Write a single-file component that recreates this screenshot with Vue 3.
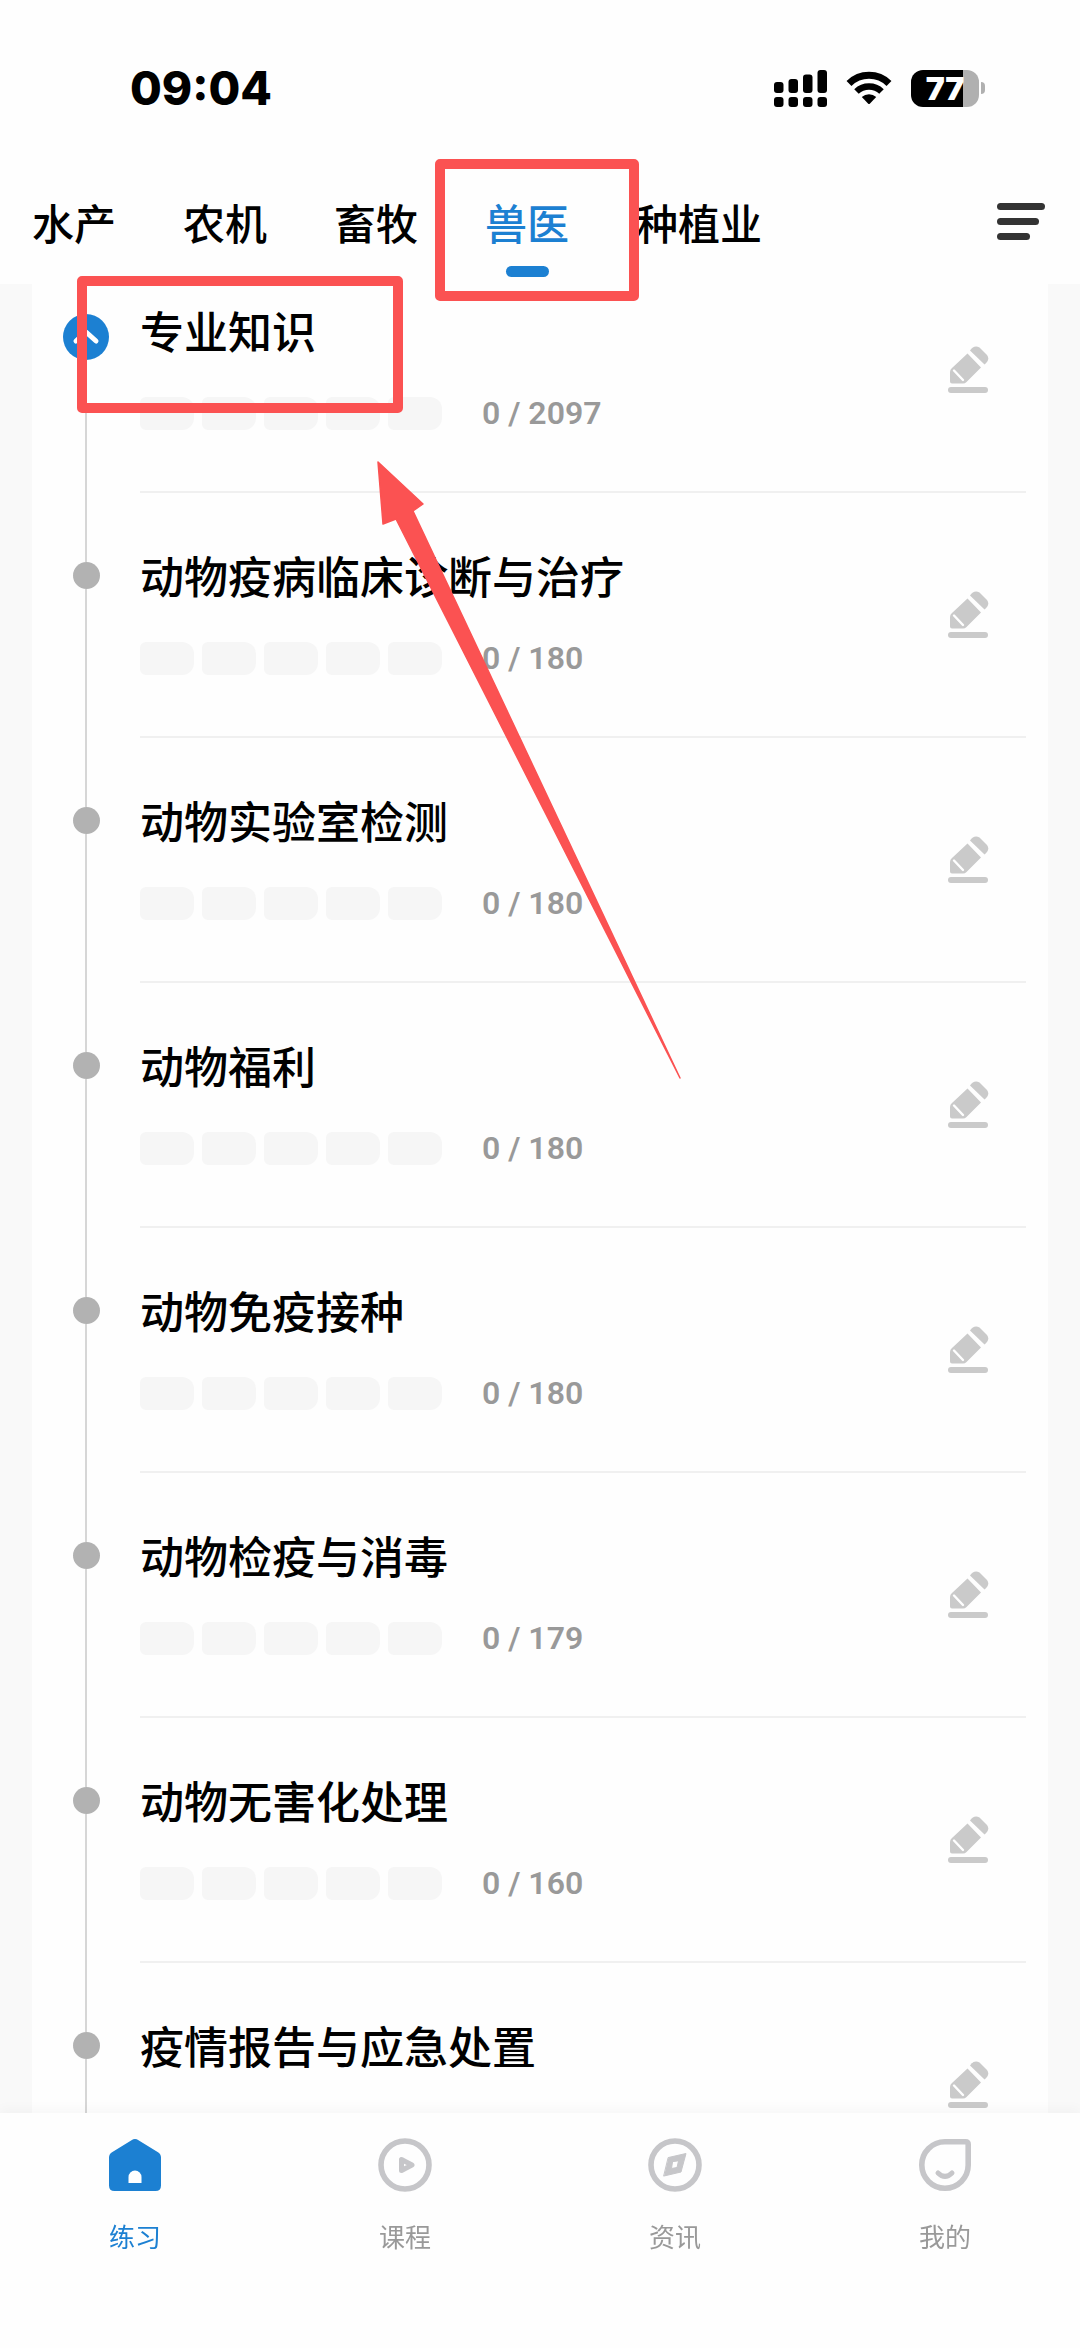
<template>
  <div class="app">
    <header class="header">
      <div class="status-bar">
        <span class="time">09:04</span>
        <div class="status-icons">
          <svg class="signal" width="53" height="37" viewBox="0 0 53 37">
            <rect x="0" y="12" width="9.5" height="11" rx="3" />
            <rect x="14.5" y="9" width="9.5" height="14" rx="3" />
            <rect x="29" y="4.5" width="9.5" height="18.5" rx="3" />
            <rect x="43.5" y="0" width="9.5" height="23" rx="3" />
            <rect x="0" y="27" width="9.5" height="10" rx="3" />
            <rect x="14.5" y="27" width="9.5" height="10" rx="3" />
            <rect x="29" y="27" width="9.5" height="10" rx="3" />
            <rect x="43.5" y="27" width="9.5" height="10" rx="3" />
          </svg>
          <svg class="wifi" width="46" height="34" viewBox="0 0 46 34">
            <path d="M3 12.5 A28.5 28.5 0 0 1 43 12.5" fill="none" stroke="#000" stroke-width="7" />
            <path d="M10.5 20.5 A18 18 0 0 1 35.5 20.5" fill="none" stroke="#000" stroke-width="6.5" />
            <path d="M15.8 26 A10.5 10.5 0 0 1 30.2 26 L24 32.6 Q23 33.6 22 32.6 Z" />
          </svg>
          <div class="battery">
            <span class="battery-body">77</span>
            <span class="battery-tip"></span>
          </div>
        </div>
      </div>

      <div class="tabs">
        <button
          v-for="tab in tabs"
          :key="tab"
          class="tab"
          :class="{ active: tab === activeTab }"
          @click="activeTab = tab"
        >
          {{ tab }}
          <span class="tab-line"></span>
        </button>
        <button class="menu" aria-label="菜单">
          <svg width="48" height="37" viewBox="0 0 48 37" fill="#333">
            <rect x="0" y="0" width="48" height="7" rx="3.5" />
            <rect x="0" y="15" width="42" height="7" rx="3.5" />
            <rect x="0" y="30" width="33" height="7" rx="3.5" />
          </svg>
        </button>
      </div>
    </header>

    <main class="content">
      <ul class="card">
        <li v-for="(item, index) in items" :key="item.title" class="item">
          <div class="rail">
            <span class="rail-top"></span>
            <button v-if="index === 0" class="collapse" aria-label="收起">
              <svg width="46" height="46" viewBox="0 0 46 46">
                <path d="M13 27 L23 18 L33 27" fill="none" stroke="#fff" stroke-width="5" stroke-linecap="round" stroke-linejoin="round" />
              </svg>
            </button>
            <span v-else class="dot"></span>
            <span class="rail-bottom"></span>
          </div>
          <div class="body">
            <div class="info">
              <h3 class="title">{{ item.title }}</h3>
              <div v-if="item.total" class="progress">
                <span v-for="n in 5" :key="n" class="pill"></span>
                <span class="count">0 / {{ item.total }}</span>
              </div>
            </div>
            <button class="edit" :aria-label="'练习 ' + item.title">
              <svg width="42" height="48" viewBox="0 0 42 48" fill="#cacaca">
                <path d="M22 5.6 Q26 -0.5 31.5 2.5 L39 10 Q42.5 15 36.5 19.5 Z" />
                <path d="M19.5 8.5 L33 22.5 L18.5 37 Q17 38.5 15 38.5 L4 38.5 Q2 38.5 2 36.5 L2 27 Q2 24.5 4 23 Z" />
                <path d="M6 25.5 L15 35" fill="none" stroke="#fff" stroke-width="2.4" stroke-linecap="round" />
                <rect x="0" y="42" width="40" height="6" rx="3" />
              </svg>
            </button>
          </div>
        </li>
      </ul>
    </main>

    <nav class="bottom-nav">
      <button
        v-for="nav in navs"
        :key="nav"
        class="nav-item"
        :class="{ active: nav === activeNav }"
        @click="activeNav = nav"
      >
        <svg v-if="nav === '练习'" width="54" height="54" viewBox="0 0 54 54">
          <path d="M23.5 2.2 Q27 -0.2 30.5 2.2 L50 14.2 Q53 16 53 19.5 V47.5 Q53 53 47.5 53 H6.5 Q1 53 1 47.5 V19.5 Q1 16 4 14.2 Z" fill="currentColor" />
          <path d="M20.5 45 V39 A6.5 6.5 0 0 1 33.5 39 V45 Z" fill="#fff" />
        </svg>
        <svg v-else-if="nav === '课程'" class="line-icon" width="54" height="54" viewBox="0 0 54 54">
          <circle cx="27" cy="27" r="24" />
          <path d="M23.5 21.5 V32.5 L34 27 Z" stroke-width="5" />
        </svg>
        <svg v-else-if="nav === '资讯'" class="line-icon" width="54" height="54" viewBox="0 0 54 54">
          <circle cx="27" cy="27" r="24" />
          <path d="M20.5 19.5 L38 15.5 L33 34 L16 38 Z M24.5 24 L23.5 30.5 L29 29.5 L30.5 23 Z" class="solid" />
        </svg>
        <svg v-else class="line-icon" width="54" height="54" viewBox="0 0 54 54">
          <path d="M27 3.8 H47.5 Q50.2 3.8 50.2 6.5 V27 A23.2 23.2 0 1 1 27 3.8 Z" />
          <path d="M20 35 Q27 42 34 35" stroke-width="5" />
        </svg>
        <span class="nav-label">{{ nav }}</span>
      </button>
    </nav>

    <!-- guide marks -->
    <div class="mark mark-tab"></div>
    <div class="mark mark-title"></div>
    <svg class="arrow" width="304" height="618" viewBox="0 0 304 618">
      <path d="M1 1 L46 43 L36 50 L303 617 L19 58 L6 63 Z" fill="#fb5252" stroke="#fb5252" stroke-width="1.5" stroke-linejoin="round" />
    </svg>
  </div>
</template>

<script setup>
import { ref } from 'vue';

const tabs = ['水产', '农机', '畜牧', '兽医', '种植业'];
const activeTab = ref('兽医');

const navs = ['练习', '课程', '资讯', '我的'];
const activeNav = ref('练习');

const items = ref([
  { title: '专业知识', total: 2097 },
  { title: '动物疫病临床诊断与治疗', total: 180 },
  { title: '动物实验室检测', total: 180 },
  { title: '动物福利', total: 180 },
  { title: '动物免疫接种', total: 180 },
  { title: '动物检疫与消毒', total: 179 },
  { title: '动物无害化处理', total: 160 },
  { title: '疫情报告与应急处置' },
]);
</script>

<style>
body {
  margin: 0;
  background: #fefefe;
}
</style>

<style scoped>
.app {
  position: relative;
  display: flex;
  flex-direction: column;
  height: 100vh;
  overflow: hidden;
  background: #fefefe;
  color: #000;
  font-family: "Noto Sans CJK SC", sans-serif;
}

button {
  padding: 0;
  border: none;
  background: none;
  color: inherit;
  font: inherit;
  cursor: pointer;
}

svg {
  display: block;
}

.status-bar {
  display: flex;
  align-items: center;
  justify-content: space-between;
  height: 56px;
  padding: 60px 95px 0 130px;
}

.time {
  font-family: Inter, sans-serif;
  font-size: 46px;
  font-weight: 800;
}

.status-icons {
  display: flex;
  align-items: center;
  gap: 19px;
}

.battery {
  display: flex;
  align-items: center;
  gap: 2px;
}

.battery-body {
  width: 68px;
  height: 37px;
  border-radius: 12px;
  background: linear-gradient(to right, #000 77%, #b0b0b0 77%);
  color: #fff;
  font-family: Inter, sans-serif;
  font-size: 32px;
  font-weight: 900;
  line-height: 37px;
  text-align: center;
}

.battery-tip {
  width: 4px;
  height: 12px;
  border-radius: 0 4px 4px 0;
  background: #b0b0b0;
}

.tabs {
  display: flex;
  align-items: flex-start;
  gap: 67px;
  padding: 78px 35px 7px 32px;
}

.tab {
  display: flex;
  flex-direction: column;
  align-items: center;
  gap: 16px;
  font-size: 42px;
  font-weight: 500;
  line-height: 56px;
  white-space: nowrap;
}

.tab-line {
  width: 43px;
  height: 11px;
  border-radius: 6px;
}

.tab.active {
  color: #1c80d2;
}

.tab.active .tab-line {
  background: #1c80d2;
}

.menu {
  margin-left: auto;
  padding-top: 9px;
}

.content {
  flex: 1;
  min-height: 0;
  overflow-y: auto;
  scrollbar-width: none;
  background: #f9f9f9;
}

.card {
  margin: 0 32px;
  padding: 0;
  background: #fefefe;
  list-style: none;
}

.item {
  display: flex;
}

.rail {
  display: flex;
  flex-direction: column;
  align-items: center;
  width: 108px;
}

.rail-top,
.rail-bottom {
  width: 2px;
  background: #d6d6d6;
}

.rail-top {
  height: 69px;
}

.rail-bottom {
  flex: 1;
}

.item:first-child .rail-top {
  height: 30px;
  background: none;
}

.dot {
  width: 27px;
  height: 27px;
  border-radius: 50%;
  background: #b2b2b2;
}

.collapse {
  border-radius: 50%;
  background: #1c80d2;
}

.body {
  display: flex;
  flex: 1;
  align-items: flex-start;
  justify-content: space-between;
  margin-right: 22px;
  padding: 52px 36px 61px 0;
  border-bottom: 2px solid #f0f0f0;
}

.item:first-child .body {
  padding-top: 16px;
}

.title {
  margin: 0;
  font-size: 44px;
  font-weight: 500;
  line-height: 60px;
}

.progress {
  display: flex;
  align-items: center;
  gap: 8px;
  height: 33px;
  margin-top: 37px;
}

.pill {
  width: 54px;
  height: 33px;
  border-radius: 6px 12px 12px 6px;
  background: #f6f6f6;
}

.count {
  margin-left: 32px;
  color: #999;
  font-family: Roboto, sans-serif;
  font-size: 32px;
  font-weight: 600;
  line-height: 33px;
}

.edit {
  padding-top: 45px;
}

.bottom-nav {
  position: relative;
  display: flex;
  padding: 25px 0 94px;
  background: #fefefe;
  box-shadow: 0 -4px 12px rgba(0, 0, 0, 0.03);
}

.nav-item {
  display: flex;
  flex: 1;
  flex-direction: column;
  align-items: center;
  gap: 26px;
  color: #c6c6c9;
}

.line-icon {
  fill: none;
  stroke: currentColor;
  stroke-width: 5.6;
  stroke-linecap: round;
  stroke-linejoin: round;
}

.line-icon .solid {
  fill: currentColor;
  fill-rule: evenodd;
  stroke-width: 1;
}

.nav-label {
  color: #999;
  font-size: 26px;
  line-height: 36px;
}

.nav-item.active,
.nav-item.active .nav-label {
  color: #1c80d2;
}

.mark {
  position: absolute;
  box-sizing: border-box;
  border: 10px solid #fb5252;
  border-radius: 5px;
  pointer-events: none;
}

.mark-tab {
  top: 159px;
  left: 435px;
  width: 204px;
  height: 142px;
}

.mark-title {
  top: 276px;
  left: 77px;
  width: 326px;
  height: 137px;
}

.arrow {
  position: absolute;
  top: 461px;
  left: 377px;
  pointer-events: none;
}
</style>
